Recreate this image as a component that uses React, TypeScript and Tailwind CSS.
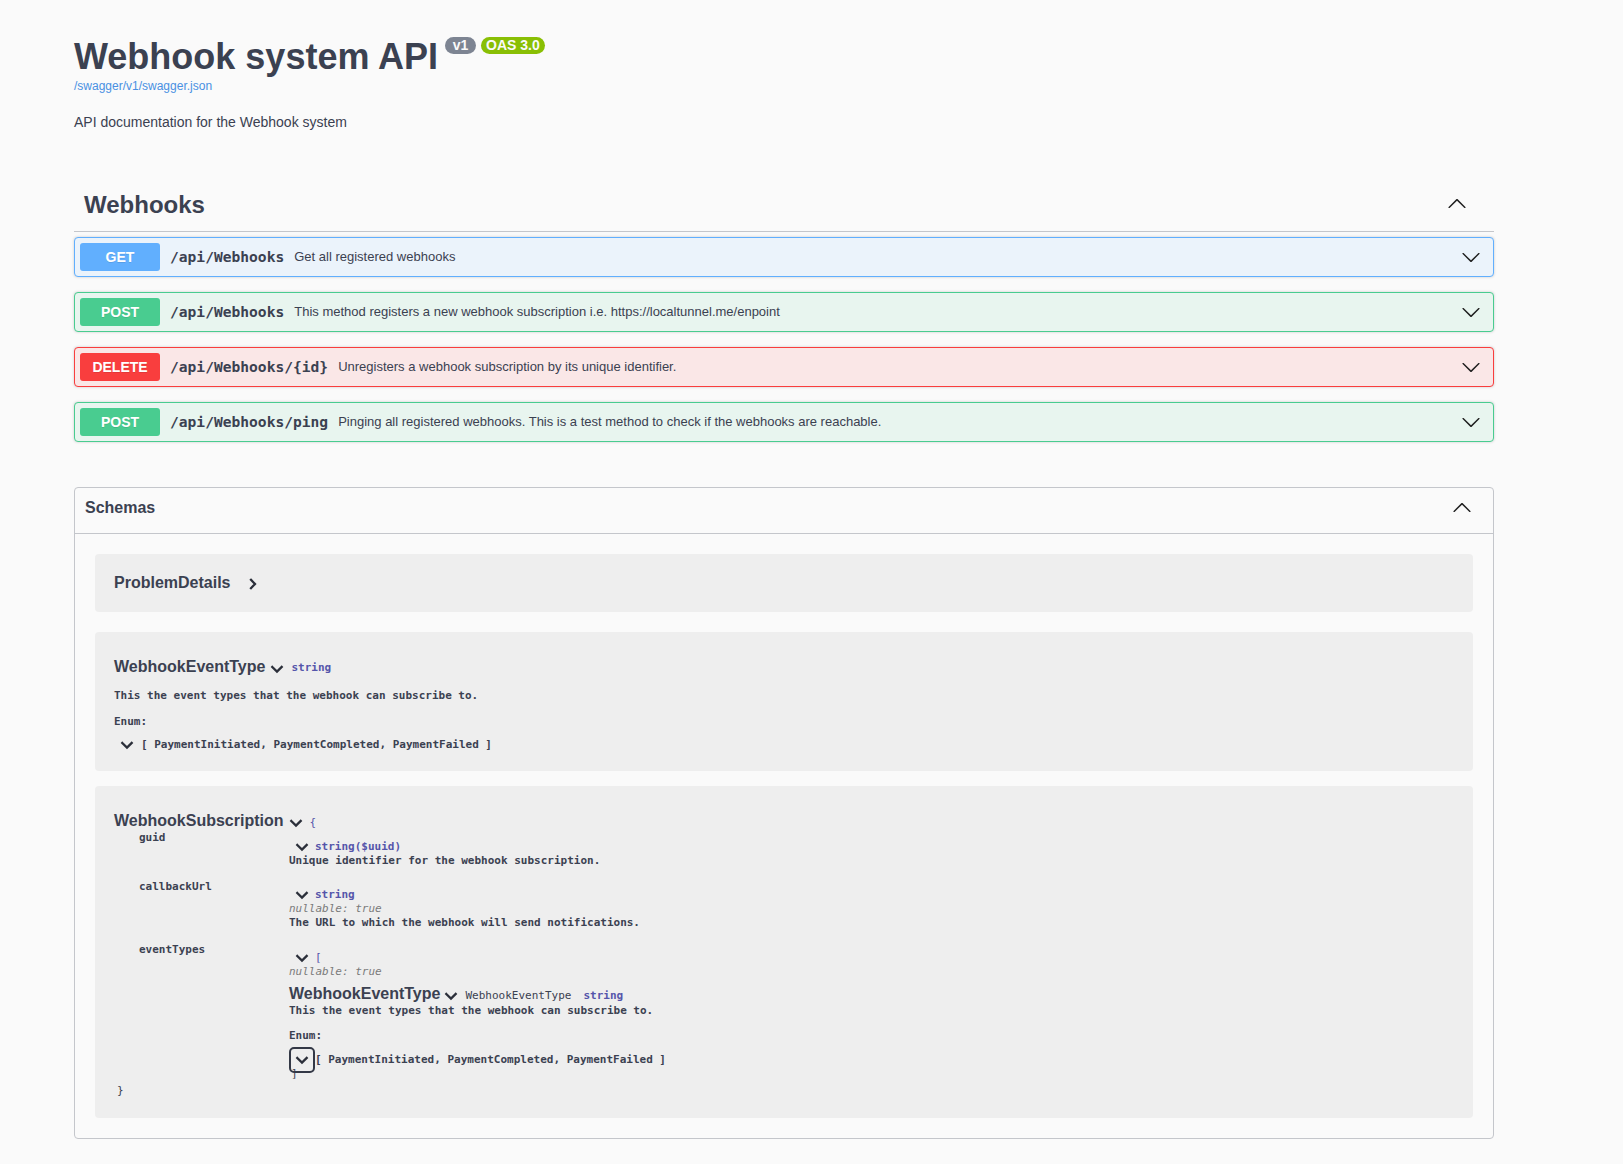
import React from "react";

const MONO = "font-['DejaVu_Sans_Mono',monospace]";

const Down = ({ className = "" }: { className?: string }) => (
  <svg viewBox="0 0 20 20" width="20" height="20" className={`shrink-0 ${className}`}>
    <polyline points="5.3,8 10,12.6 14.7,8" fill="none" stroke="#2b2f3a" strokeWidth="2.3" strokeLinecap="square" />
  </svg>
);

const Right = ({ className = "" }: { className?: string }) => (
  <svg viewBox="0 0 20 20" width="20" height="20" className={`shrink-0 ${className}`}>
    <polyline points="8,5.8 12,10 8,14.2" fill="none" stroke="#2b2f3a" strokeWidth="2.3" strokeLinecap="square" />
  </svg>
);

const Arrow = ({ up = false, className = "" }: { up?: boolean; className?: string }) => (
  <svg
    viewBox="0 0 20 20"
    width="20"
    height="20"
    className={`shrink-0 ${up ? "rotate-180" : ""} ${className}`}
  >
    <path
      d="M17.418 6.109c.272-.268.709-.268.979 0s.271.701 0 .969l-7.908 7.83c-.27.268-.707.268-.979 0l-7.908-7.83c-.27-.268-.27-.701 0-.969.271-.268.709-.268.979 0L10 13.25l7.418-7.141z"
      fill="#1f1f1f"
    />
  </svg>
);

type Op = {
  method: string;
  path: string;
  desc: string;
  badge: string;
  bg: string;
  border: string;
};

const ops: Op[] = [
  {
    method: "GET",
    path: "/api/Webhooks",
    desc: "Get all registered webhooks",
    badge: "bg-[#61affe]",
    bg: "bg-[#ebf3fb]",
    border: "border-[#61affe]",
  },
  {
    method: "POST",
    path: "/api/Webhooks",
    desc: "This method registers a new webhook subscription i.e. https://localtunnel.me/enpoint",
    badge: "bg-[#49cc90]",
    bg: "bg-[#e8f5ef]",
    border: "border-[#49cc90]",
  },
  {
    method: "DELETE",
    path: "/api/Webhooks/{id}",
    desc: "Unregisters a webhook subscription by its unique identifier.",
    badge: "bg-[#f93e3e]",
    bg: "bg-[#fae7e7]",
    border: "border-[#f93e3e]",
  },
  {
    method: "POST",
    path: "/api/Webhooks/ping",
    desc: "Pinging all registered webhooks. This is a test method to check if the webhooks are reachable.",
    badge: "bg-[#49cc90]",
    bg: "bg-[#e8f5ef]",
    border: "border-[#49cc90]",
  },
];

const Line = ({ children, className = "" }: { children: React.ReactNode; className?: string }) => (
  <div className={`flex h-[14px] items-center whitespace-pre ${className}`}>{children}</div>
);

const Nullable = () => (
  <Line>
    <span className="italic font-normal text-[#7a7a7a]">nullable: true</span>
  </Line>
);

export default function App() {
  return (
    <div className="min-h-screen bg-[#fafafa] font-['Liberation_Sans',Arial,sans-serif] text-[#3b4151]">
      <div className="ml-[74px] w-[1420px] pt-[36px] pb-[25px]">
        {/* Info */}
        <div className="flex items-start">
          <h2 className="text-[36px] font-bold leading-[41px] text-[#3b4151]">Webhook system API</h2>
          <span className="ml-[7px] mt-[1px] flex h-[17px] w-[31px] items-center justify-center rounded-full bg-[#7d8492] text-[14px] font-bold leading-[17px] text-[#fafafa]">
            v1
          </span>
          <span className="ml-[5px] mt-[1px] flex h-[17px] items-center rounded-full bg-[#89bf04] px-[5px] text-[14px] font-bold leading-[17px] text-[#fafafa]">
            OAS 3.0
          </span>
        </div>
        <div className="mt-[2px] text-[12px] leading-[14px] text-[#4990e2]">/swagger/v1/swagger.json</div>
        <p className="mt-[21px] text-[14px] leading-[16px] text-[#3b4151]">API documentation for the Webhook system</p>

        {/* Tag section */}
        <div className="mt-[53px]">
          <div className="flex items-center justify-between border-b border-[#c4c6cb] pl-[10px] pt-[8px] pb-[12px]">
            <span className="text-[24px] font-bold leading-[28px] text-[#3b4151]">Webhooks</span>
            <Arrow up className="mr-[27px] -mt-[2px]" />
          </div>
          <div className="mt-[5px] flex flex-col gap-[15px]">
            {ops.map((op, i) => (
              <div
                key={i}
                className={`flex h-[40px] items-center rounded-[4px] border ${op.border} ${op.bg} px-[5px] shadow-[0_0_3px_rgba(0,0,0,0.19)]`}
              >
                <span
                  className={`flex h-[28px] w-[80px] shrink-0 items-center justify-center rounded-[3px] ${op.badge} text-[14px] font-bold text-white [text-shadow:0_1px_0_rgba(0,0,0,0.1)]`}
                >
                  {op.method}
                </span>
                <span className={`pl-[10px] pr-[10px] ${MONO} text-[14.6px] font-bold text-[#3b4151]`}>{op.path}</span>
                <span className="flex-1 text-[13px] text-[#3b4151]">{op.desc}</span>
                <Arrow className="mr-[7px]" />
              </div>
            ))}
          </div>
        </div>

        {/* Schemas */}
        <div className="mt-[45px] rounded-[4px] border border-[#c4c6cb]">
          <div className="flex items-center justify-between border-b border-[#c4c6cb] pl-[10px] pt-[10px] pb-[15px]">
            <span className="text-[16px] font-bold leading-[18px] text-[#3b4151]">Schemas</span>
            <Arrow up className="mr-[21px]" />
          </div>
          <div className="px-[20px] pt-[20px] pb-[20px]">
            {/* ProblemDetails */}
            <div className="flex h-[58px] items-center rounded-[4px] bg-[#eeeeee] pl-[19px]">
              <span className="text-[16px] font-bold leading-[20px] text-[#3b4151]">ProblemDetails</span>
              <Right className="ml-[13px] mt-[1px]" />
            </div>

            {/* WebhookEventType */}
            <div className={`mt-[20px] rounded-[4px] bg-[#eeeeee] pl-[19px] pt-[25px] pb-[19px] ${MONO} text-[11px] font-bold text-[#3b4151]`}>
              <div className="flex h-[20px] items-center font-['Liberation_Sans',Arial,sans-serif]">
                <span className="text-[16px] font-bold leading-[20px] text-[#3b4151]">WebhookEventType</span>
                <Down className="ml-[2px] mt-[3px]" />
                <span className={`ml-[4px] mt-[3px] ${MONO} text-[11px] font-bold text-[#55a]`}>string</span>
              </div>
              <Line className="mt-[12px]">This the event types that the webhook can subscribe to.</Line>
              <Line className="mt-[12px]">Enum:</Line>
              <Line className="mt-[9px]">
                <Down className="ml-[3px]" />
                <span className="ml-[4px]">[ PaymentInitiated, PaymentCompleted, PaymentFailed ]</span>
              </Line>
            </div>

            {/* WebhookSubscription */}
            <div className={`mt-[15px] rounded-[4px] bg-[#eeeeee] pl-[19px] pt-[25px] pb-[20px] ${MONO} text-[11px] font-bold leading-[14px] text-[#3b4151]`}>
              <div className="flex h-[20px] items-center">
                <span className="font-['Liberation_Sans',Arial,sans-serif] text-[16px] font-bold leading-[20px] text-[#3b4151]">
                  WebhookSubscription
                </span>
                <Down className="ml-[3px] mt-[3px]" />
                <span className="ml-[3px] mt-[3px] font-normal text-[#55a]">{"{"}</span>
              </div>

              {/* guid */}
              <div className="flex">
                <div className="w-[175px] shrink-0 pl-[25px] leading-[14px]">guid</div>
                <div className="flex flex-col pt-[9px]">
                  <Line>
                    <Down className="ml-[3px]" />
                    <span className="ml-[3px] text-[#55a]">string($uuid)</span>
                  </Line>
                  <Line>Unique identifier for the webhook subscription.</Line>
                </div>
              </div>

              {/* callbackUrl */}
              <div className="mt-[12px] flex">
                <div className="w-[175px] shrink-0 pl-[25px] leading-[14px]">callbackUrl</div>
                <div className="flex flex-col pt-[8px]">
                  <Line>
                    <Down className="ml-[3px]" />
                    <span className="ml-[3px] text-[#55a]">string</span>
                  </Line>
                  <Nullable />
                  <Line>The URL to which the webhook will send notifications.</Line>
                </div>
              </div>

              {/* eventTypes */}
              <div className="mt-[13px] flex">
                <div className="w-[175px] shrink-0 pl-[25px] leading-[14px]">eventTypes</div>
                <div className="flex flex-col pt-[8px]">
                  <Line>
                    <Down className="ml-[3px]" />
                    <span className="ml-[3px] font-normal text-[#55a]">[</span>
                  </Line>
                  <Nullable />
                  <div className="mt-[6px] flex h-[18px] items-center">
                    <span className="font-['Liberation_Sans',Arial,sans-serif] text-[16px] font-bold leading-[18px] text-[#3b4151]">
                      WebhookEventType
                    </span>
                    <Down className="ml-[1px] mt-[3px]" />
                    <span className="ml-[4px] mt-[3px] font-normal">WebhookEventType</span>
                    <span className="ml-[12px] mt-[3px] text-[#55a]">string</span>
                  </div>
                  <Line className="mt-[1px]">This the event types that the webhook can subscribe to.</Line>
                  <Line className="mt-[11px]">Enum:</Line>
                  <div className="mt-[4px] flex h-[26px] items-center whitespace-pre">
                    <span className="relative z-10 flex h-[26px] w-[26px] items-center justify-center rounded-[5px] border-2 border-[#333846]">
                      <Down />
                    </span>
                    <span>[ PaymentInitiated, PaymentCompleted, PaymentFailed ]</span>
                  </div>
                  <Line className="-mt-[6px] pl-[2px] font-normal">]</Line>
                </div>
              </div>

              <Line className="mt-[3px] pl-[3px] font-normal">{"}"}</Line>
            </div>
          </div>
        </div>
      </div>
    </div>
  );
}
